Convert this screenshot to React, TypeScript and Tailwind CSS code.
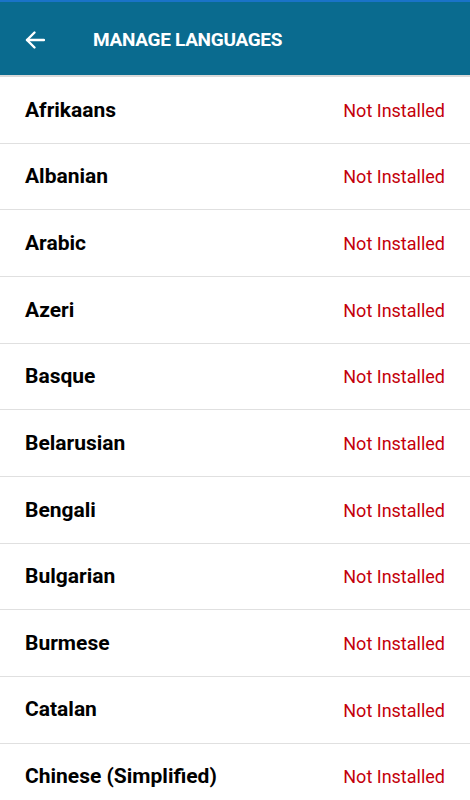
const languages = [
  'Afrikaans',
  'Albanian',
  'Arabic',
  'Azeri',
  'Basque',
  'Belarusian',
  'Bengali',
  'Bulgarian',
  'Burmese',
  'Catalan',
  'Chinese (Simplified)',
];

export default function App() {
  return (
    <div className="w-[470px] h-[800px] overflow-hidden bg-white" style={{ fontFamily: 'Roboto, "Noto Sans", sans-serif' }}>
      {/* header */}
      <div className="h-[2px] bg-[#1a73c8]" />
      <div className="h-[73px] bg-[#0a6b8f] flex items-center border-b-2 border-[#d9d9d9] box-content">
        <button className="w-[20px] h-[20px] ml-[25px] mt-[3px] flex items-center justify-center">
          <svg width="20" height="20" viewBox="0 0 20 20" fill="none" stroke="white" strokeWidth="2.4" strokeLinecap="round" strokeLinejoin="round">
            <path d="M19 10H2" />
            <path d="M9.5 2.5L2 10l7.5 7.5" />
          </svg>
        </button>
        <h1 className="ml-[48px] mt-[3px] text-white font-bold text-[19px] tracking-[-0.3px] uppercase">Manage Languages</h1>
      </div>

      {/* language list */}
      <div>
        {languages.map((lang) => (
          <div key={lang} className="h-[66.67px] flex items-center justify-between px-[25px] border-b border-[#e0e0e0]">
            <span className="text-[21px] font-bold text-black pt-[1px]">{lang}</span>
            <span className="text-[18px] text-[#c4000b] pt-[1px]">Not Installed</span>
          </div>
        ))}
      </div>
    </div>
  );
}
